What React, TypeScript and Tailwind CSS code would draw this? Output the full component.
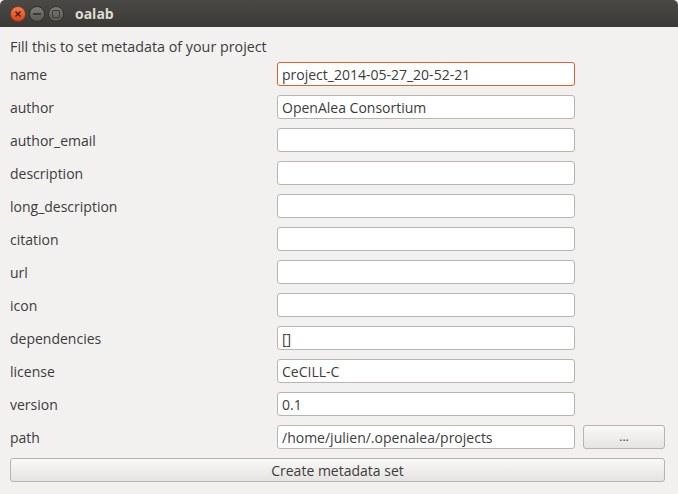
import React from "react";

const fields: { label: string; value: string; focused?: boolean }[] = [
  { label: "name", value: "project_2014-05-27_20-52-21", focused: true },
  { label: "author", value: "OpenAlea Consortium" },
  { label: "author_email", value: "" },
  { label: "description", value: "" },
  { label: "long_description", value: "" },
  { label: "citation", value: "" },
  { label: "url", value: "" },
  { label: "icon", value: "" },
  { label: "dependencies", value: "[]" },
  { label: "license", value: "CeCILL-C" },
  { label: "version", value: "0.1" },
];

function TitleBar() {
  return (
    <div className="h-[27px] bg-gradient-to-b from-[#4a4945] to-[#3a3935] flex items-center pl-[10px] rounded-t-[5px]">
      <div className="w-[16px] h-[16px] rounded-full bg-gradient-to-b from-[#f47a4d] to-[#d9461a] border border-[#8a3a1a] flex items-center justify-center">
        <svg width="8" height="8" viewBox="0 0 8 8">
          <path d="M1.5 1.5 L6.5 6.5 M6.5 1.5 L1.5 6.5" stroke="#4a1a08" strokeWidth="1.4" />
        </svg>
      </div>
      <div className="ml-[3px] w-[16px] h-[16px] rounded-full bg-gradient-to-b from-[#7c7b76] to-[#5a5954] border border-[#33322e] flex items-center justify-center">
        <div className="w-[8px] h-[2px] bg-[#3a3935]" />
      </div>
      <div className="ml-[3px] w-[16px] h-[16px] rounded-full bg-gradient-to-b from-[#7c7b76] to-[#5a5954] border border-[#33322e] flex items-center justify-center">
        <div className="w-[8px] h-[8px] border-[1.5px] border-[#3a3935] rounded-[1px]" />
      </div>
      <span className="ml-[11px] text-[14px] font-bold text-[#dfdbd2]">oalab</span>
    </div>
  );
}

function TextBox({ value, focused }: { value: string; focused?: boolean }) {
  return (
    <div
      className={`w-[298px] h-[24px] bg-white rounded-[3px] border flex items-center px-[4px] text-[14px] text-[#3c3c3c] ${
        focused ? "border-[#e0602f]" : "border-[#b8b5b0]"
      }`}
    >
      {value}
    </div>
  );
}

export default function App() {
  return (
    <div
      className="w-[678px] h-[494px] bg-[#f2f1f0] text-[#3c3c3c] flex flex-col"
      style={{ fontFamily: '"Open Sans", "DejaVu Sans", sans-serif' }}
    >
      <TitleBar />
      <div className="flex flex-col px-[10px] pt-[9px]">
        <div className="h-[21px] flex items-center text-[14.3px] text-[#3c3c3c] mb-[5px]">
          Fill this to set metadata of your project
        </div>
        <div className="flex flex-col gap-[9px]">
          {fields.map((f) => (
            <div key={f.label} className="flex items-center h-[24px]">
              <span className="w-[267px] text-[14px]">{f.label}</span>
              <TextBox value={f.value} focused={f.focused} />
            </div>
          ))}
          <div className="flex items-center h-[24px]">
            <span className="w-[267px] text-[14px]">path</span>
            <TextBox value="/home/julien/.openalea/projects" />
            <button className="ml-[8px] w-[82px] h-[24px] rounded-[3px] border border-[#b8b5b0] bg-gradient-to-b from-[#f8f8f7] to-[#e6e4e1] text-[12px] text-[#3c3c3c] leading-none">
              ...
            </button>
          </div>
        </div>
        <button className="mt-[9px] w-[655px] h-[24px] rounded-[3px] border border-[#b8b5b0] bg-gradient-to-b from-[#f8f8f7] to-[#e6e4e1] text-[14px] text-[#3c3c3c]">
          Create metadata set
        </button>
      </div>
    </div>
  );
}
